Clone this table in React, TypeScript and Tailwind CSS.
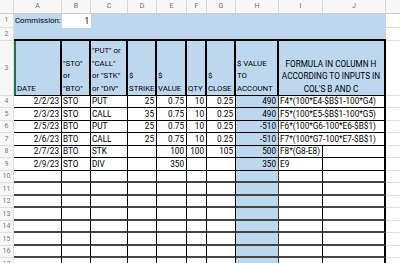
import type { ReactNode } from 'react';

const BLUE = 'bg-[#bdd7ee]';

function Cell({ w, className = '', children }: { w: string; className?: string; children?: ReactNode }) {
  return (
    <div className={`${w} shrink-0 box-border flex whitespace-nowrap pl-[1px] pr-[2px] ${className}`}>
      {children}
    </div>
  );
}

function RowNum({ n }: { n: number }) {
  return (
    <div className="w-[14px] shrink-0 box-border flex items-center justify-center text-[7px] text-[#7b7b7b] bg-[#f7f7f7] border-r border-b border-[#dedede]">
      {n}
    </div>
  );
}

const data = [
  ['2/2/23', 'STO', 'PUT', '25', '0.75', '10', '0.25', '490', 'F4*(100*E4-$B$1-100*G4)'],
  ['2/3/23', 'STO', 'CALL', '35', '0.75', '10', '0.25', '490', 'F5*(100*E5-$B$1-100*G5)'],
  ['2/5/23', 'BTO', 'PUT', '25', '0.75', '10', '0.25', '-510', 'F6*(100*G6-100*E6-$B$1)'],
  ['2/6/23', 'BTO', 'CALL', '25', '0.75', '10', '0.25', '-510', 'F7*(100*G7-100*E7-$B$1)'],
  ['2/7/23', 'BTO', 'STK', '', '100', '100', '105', '500', 'F8*(G8-E8)'],
  ['2/9/23', 'STO', 'DIV', '', '350', '', '', '350', 'E9'],
];

// row heights alternate so 13 rows fill 96..258
const heights = ['h-[12px]', 'h-[13px]'];

export default function App() {
  const num = 'items-center justify-end';
  const txt = 'items-center';

  return (
    <div className="w-[400px] h-[263px] overflow-hidden bg-white text-black text-[7.8px] leading-none font-['Roboto','Liberation_Sans',Arial,sans-serif]">
      {/* column letters */}
      <div className="flex h-[14px] bg-[#f7f7f7] text-[7px] text-[#6f6f6f] border-b border-[#cfcfcf]">
        <div className="w-[14px] shrink-0 border-r border-[#d6d6d6]" />
        {[
          ['A', 'w-[48px]'],
          ['B', 'w-[29px]'],
          ['C', 'w-[37px]'],
          ['D', 'w-[29px]'],
          ['E', 'w-[30px]'],
          ['F', 'w-[20px]'],
          ['G', 'w-[29px]'],
          ['H', 'w-[43px]'],
          ['I', 'w-[44px]'],
          ['J', 'w-[63px]'],
        ].map(([l, w]) => (
          <div key={l} className={`${w} shrink-0 flex items-center justify-center border-r border-[#d6d6d6]`}>
            {l}
          </div>
        ))}
        <div className="flex-1" />
      </div>

      {/* row 1 */}
      <div className="flex h-[14px]">
        <RowNum n={1} />
        <Cell w="w-[48px]" className={`${BLUE} ${txt}`}>Commission:</Cell>
        <Cell w="w-[29px]" className={`bg-white text-[8.2px] ${num}`}>1</Cell>
        <div className={`w-[295px] shrink-0 ${BLUE}`} />
        <div className="flex-1 border-b border-[#dedede]" />
      </div>

      {/* row 2 */}
      <div className="flex h-[13px]">
        <RowNum n={2} />
        <div className={`w-[372px] shrink-0 ${BLUE} border-b-2 border-black`} />
        <div className="flex-1 border-b border-[#dedede]" />
      </div>

      {/* row 3 headers */}
      <div className="flex h-[55px] leading-[12.5px]">
        <RowNum n={3} />
        <Cell w="w-[48px]" className={`${BLUE} items-end border-l-2 border-l-[#217346] border-r-2 border-r-black border-b border-b-black`}>
          DATE
        </Cell>
        {[
          ['w-[29px]', ['"STO"', 'or', '"BTO"']],
          ['w-[37px]', ['"PUT" or', '"CALL"', 'or "STK"', 'or "DIV"']],
          ['w-[29px]', ['$', 'STRIKE']],
          ['w-[30px]', ['$', 'VALUE']],
          ['w-[20px]', ['QTY']],
          ['w-[29px]', ['$', 'CLOSE']],
          ['w-[43px]', ['$ VALUE', 'TO', 'ACCOUNT']],
        ].map(([w, lines], i) => (
          <Cell key={i} w={w as string} className={`${BLUE} flex-col justify-end border-r-2 border-b border-black`}>
            {(lines as string[]).map((t) => (
              <span key={t}>{t}</span>
            ))}
          </Cell>
        ))}
        <Cell w="w-[107px]" className={`${BLUE} text-[8.2px] flex-col justify-end items-center border-r-2 border-b border-black`}>
          <span>FORMULA IN COLUMN H</span>
          <span>ACCORDING TO INPUTS IN</span>
          <span>COL'S B AND C</span>
        </Cell>
        <div className="flex-1 border-b border-[#dedede]" />
      </div>

      {/* data rows */}
      {Array.from({ length: 14 }).map((_, i) => {
        const r = data[i];
        const h = heights[i % 2];
        const merged = i < 4;
        // lower empty rows have the heavier horizontal rules
        const b = i >= 6 ? 'border-b-2 border-b-[#444444]' : 'border-b border-b-black';
        const line = `border-r border-r-black ${b}`;
        return (
          <div key={i} className={`flex text-[8.2px] ${h}`}>
            <RowNum n={i + 4} />
            <Cell w="w-[48px]" className={`${line} ${num}`}>{r?.[0]}</Cell>
            <Cell w="w-[29px]" className={`${line} ${txt}`}>{r?.[1]}</Cell>
            <Cell w="w-[37px]" className={`${line} ${txt}`}>{r?.[2]}</Cell>
            <Cell w="w-[29px]" className={`${line} ${num}`}>{r?.[3]}</Cell>
            <Cell w="w-[30px]" className={`${line} ${num}`}>{r?.[4]}</Cell>
            <Cell w="w-[20px]" className={`${line} ${num}`}>{r?.[5]}</Cell>
            <Cell w="w-[29px]" className={`${line} ${num}`}>{r?.[6]}</Cell>
            <Cell w="w-[43px]" className={`${BLUE} border-r border-r-[#3a3a3a] ${b} ${num}`}>{r?.[7]}</Cell>
            {merged ? (
              <Cell w="w-[107px]" className={`border-r-2 border-r-black ${b} ${txt}`}>{r?.[8]}</Cell>
            ) : (
              <>
                <Cell w="w-[44px]" className={`${line} ${txt}`}>{r?.[8]}</Cell>
                <Cell w="w-[63px]" className={`border-r-2 border-r-black ${b}`} />
              </>
            )}
            <div className="flex-1 border-b border-[#dedede]" />
          </div>
        );
      })}
    </div>
  );
}
